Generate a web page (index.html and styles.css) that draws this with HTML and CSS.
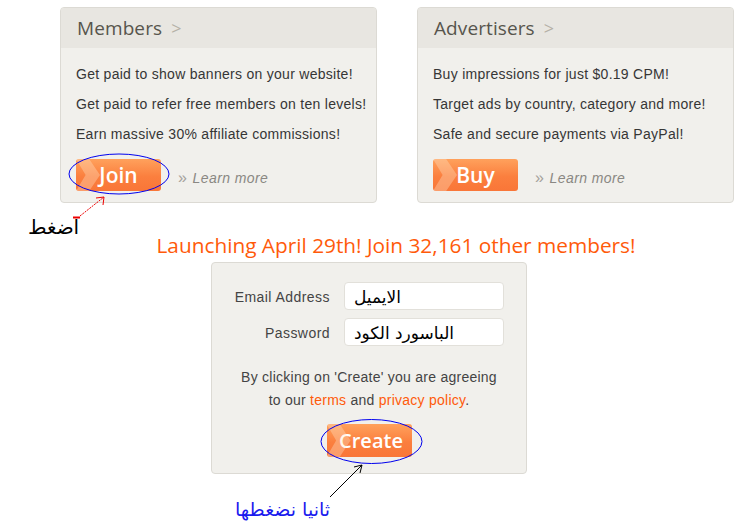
FILE: index.html
```html
<!DOCTYPE html>
<html>
<head>
<meta charset="utf-8">
<link rel="stylesheet" href="styles.css">
</head>
<body>
<div class="page">
  <div class="cards">
    <div class="card">
      <div class="card-head"><span class="title">Members</span><span class="gt">&gt;</span></div>
      <div class="card-body">
        <p>Get paid to show banners on your website!</p>
        <p>Get paid to refer free members on ten levels!</p>
        <p>Earn massive 30% affiliate commissions!</p>
        <div class="actions">
          <a class="btn">Join</a>
          <a class="learn"><span class="raquo">&raquo;</span> Learn more</a>
        </div>
      </div>
    </div>
    <div class="card">
      <div class="card-head"><span class="title">Advertisers</span><span class="gt">&gt;</span></div>
      <div class="card-body">
        <p>Buy impressions for just $0.19 CPM!</p>
        <p>Target ads by country, category and more!</p>
        <p>Safe and secure payments via PayPal!</p>
        <div class="actions">
          <a class="btn">Buy</a>
          <a class="learn"><span class="raquo">&raquo;</span> Learn more</a>
        </div>
      </div>
    </div>
  </div>

  <h2 class="launch">Launching April 29th! Join 32,161 other members!</h2>

  <div class="form">
    <div class="row"><label>Email Address</label><div class="input">الايميل</div></div>
    <div class="row"><label>Password</label><div class="input">الباسورد الكود</div></div>
    <p class="agree">By clicking on 'Create' you are agreeing<br>to our <a>terms</a> and <a>privacy policy</a>.</p>
    <div class="create-row"><a class="btn create">Create</a></div>
  </div>
</div>

<div class="note note1">اضغط</div>
<div class="note note2">ثانيا نضغطها</div>

<svg class="overlay" width="738" height="530" viewBox="0 0 738 530">
  <ellipse cx="119" cy="174" rx="50" ry="20" fill="none" stroke="#0000ee" stroke-width="1"/>
  <ellipse cx="371.5" cy="441.5" rx="50.5" ry="22" fill="none" stroke="#0000ee" stroke-width="1"/>
  <line x1="73" y1="217.5" x2="80" y2="217.5" stroke="#ee0000" stroke-width="2"/>
  <line x1="80" y1="216" x2="104" y2="197" stroke="#ee0000" stroke-width="1" stroke-dasharray="2 1"/>
  <polyline points="96,198 104,197 103,205" fill="none" stroke="#ee0000" stroke-width="1"/>
  <line x1="330" y1="497" x2="362" y2="465" stroke="#000" stroke-width="1"/>
  <polyline points="354,467 362,465 360,473" fill="none" stroke="#000" stroke-width="1"/>
</svg>
</body>
</html>
```

FILE: styles.css
```css
html, body {
  margin: 0;
  padding: 0;
  background: #fff;
}
body {
  width: 738px;
  height: 530px;
  position: relative;
  overflow: hidden;
  font-family: "Liberation Sans", Arial, sans-serif;
  color: #3c3c3c;
}
.page {
  padding-top: 7px;
}
.cards {
  display: flex;
  gap: 40px;
  padding-left: 60px;
}
.card {
  width: 315px;
  height: 194px;
  background: #f1f0ec;
  border: 1px solid #dcdad4;
  border-radius: 4px;
  overflow: hidden;
}
.card-head {
  height: 40px;
  background: #e8e6e1;
  display: flex;
  align-items: center;
  padding-left: 16px;
  gap: 9px;
}
.title {
  font-family: "Open Sans", sans-serif;
  font-size: 19px;
  color: #57554d;
  letter-spacing: 0.1px;
}
.gt {
  font-family: "Open Sans", sans-serif;
  font-size: 18px;
  color: #b5b1a7;
}
.card-body {
  padding: 11px 0 0 15px;
}
.card-body p {
  margin: 0;
  height: 30px;
  line-height: 30px;
  font-size: 14px;
  letter-spacing: 0.28px;
  color: #363636;
}
.actions {
  display: flex;
  align-items: center;
  margin-top: 10px;
  gap: 17px;
}
.btn {
  position: relative;
  display: block;
  width: 85px;
  height: 32px;
  border-radius: 3px;
  background: linear-gradient(#ffa15c, #fb7f3e 55%, #f97638);
  color: #fff;
  font-family: "Open Sans", sans-serif;
  font-weight: 600;
  font-size: 21px;
  line-height: 32px;
  text-align: center;
  padding-left: 0;
  box-sizing: border-box;
  overflow: hidden;
}
.btn::before {
  content: "";
  position: absolute;
  left: 0;
  top: 0;
  width: 24px;
  height: 100%;
  background: rgba(255, 230, 200, 0.35);
  clip-path: polygon(0 0, 55% 0, 100% 50%, 55% 100%, 0 100%, 40% 50%);
}
.learn {
  font-size: 14px;
  font-style: italic;
  letter-spacing: 0.4px;
  color: #8a8883;
  margin-top: 6px;
}
.raquo {
  font-style: normal;
  font-size: 16px;
  color: #a5a29c;
  margin-right: 1px;
}
.launch {
  margin: 28px 0 0 0;
  height: 28px;
  line-height: 28px;
  text-align: center;
  font-family: "Open Sans", sans-serif;
  font-weight: normal;
  font-size: 20.8px;
  color: #ff5a0a;
  padding-left: 54px;
}
.form {
  margin: 3px 0 0 211px;
  width: 316px;
  height: 212px;
  box-sizing: border-box;
  background: #f1f0ec;
  border: 1px solid #dcdad4;
  border-radius: 4px;
  padding-top: 19px;
}
.row {
  display: flex;
  align-items: center;
  height: 28px;
  margin-bottom: 8px;
}
.row label {
  width: 118px;
  text-align: right;
  font-size: 14px;
  letter-spacing: 0.45px;
  color: #444;
  padding-right: 14px;
  padding-top: 2px;
}
.input {
  width: 160px;
  height: 28px;
  box-sizing: border-box;
  background: #fff;
  border: 1px solid #e2e0da;
  border-radius: 4px;
  font-family: "DejaVu Sans", sans-serif;
  font-size: 17px;
  line-height: 28px;
  padding-left: 9px;
  color: #000;
  text-align: left;
}
.agree {
  margin: 20px 0 0 0;
  text-align: center;
  font-size: 14px;
  letter-spacing: 0.25px;
  line-height: 23px;
  color: #444;
}
.agree a {
  color: #ff5a0a;
}
.create-row {
  display: flex;
  justify-content: center;
  margin-top: 12px;
}
.btn.create {
  width: 85px;
  height: 33px;
  line-height: 33px;
  padding-left: 4px;
  font-size: 20px;
}
.note {
  position: absolute;
  font-family: "DejaVu Sans", sans-serif;
  white-space: nowrap;
}
.note1 {
  left: 28px;
  top: 215px;
  font-size: 20px;
  color: #000;
}
.note2 {
  left: 235px;
  top: 498px;
  font-size: 19px;
  color: #1a1aee;
}
.overlay {
  position: absolute;
  left: 0;
  top: 0;
  pointer-events: none;
}
```
